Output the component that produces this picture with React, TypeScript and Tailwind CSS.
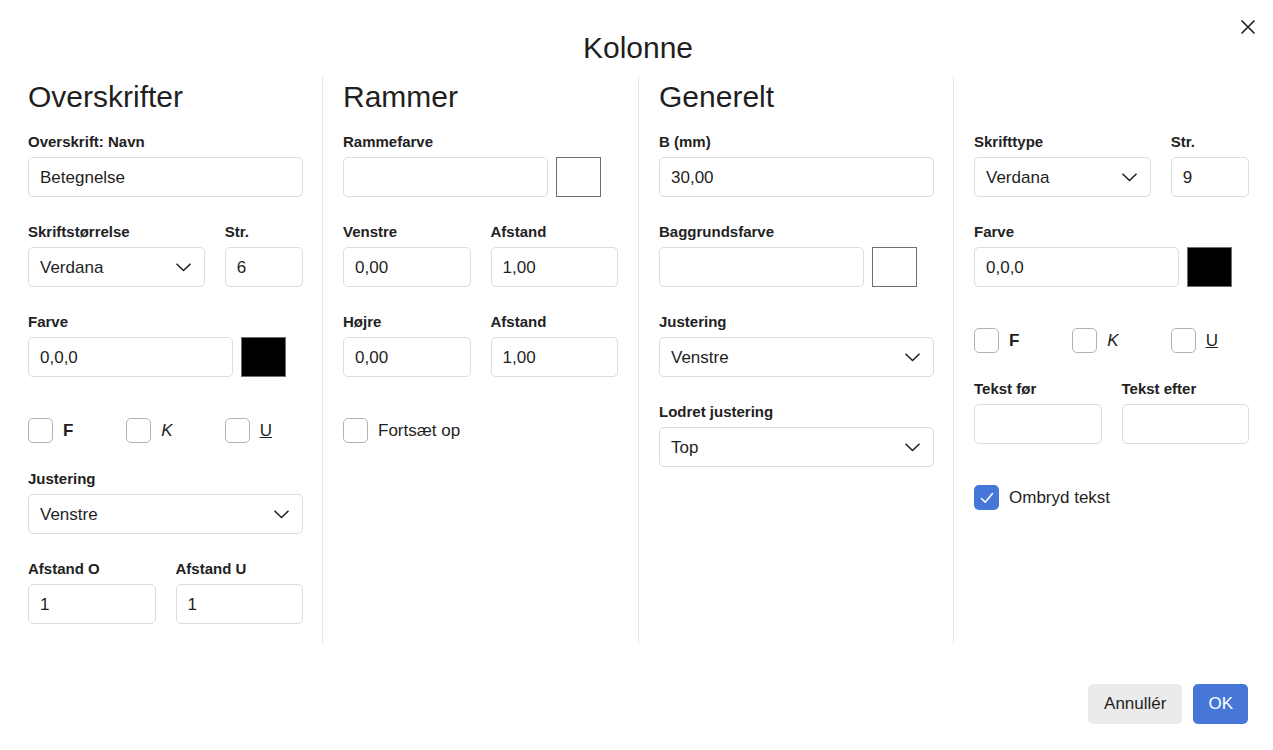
import React from 'react';

const Label: React.FC<{ children: React.ReactNode }> = ({ children }) => (
  <div className="text-[15px] leading-[18px] font-bold text-[#222] mb-[6px] whitespace-nowrap">{children}</div>
);

const Input: React.FC<{ value?: string; className?: string }> = ({ value = '', className = '' }) => (
  <div
    className={`h-[40px] rounded-[5px] border border-[#dcdcdc] bg-white px-[11px] pt-[2px] flex items-center text-[17px] text-[#1f1f1f] ${className}`}
  >
    {value}
  </div>
);

const Select: React.FC<{ value: string; className?: string }> = ({ value, className = '' }) => (
  <div
    className={`h-[40px] rounded-[5px] border border-[#dcdcdc] bg-white pl-[11px] pr-[13px] flex items-center justify-between text-[17px] text-[#1f1f1f] ${className}`}
  >
    <span className="pt-[2px]">{value}</span>
    <svg width="15" height="9" viewBox="0 0 15 9" fill="none">
      <path d="M1 1.2 7.5 7.5 14 1.2" stroke="#222" strokeWidth="1.6" strokeLinecap="round" strokeLinejoin="round" />
    </svg>
  </div>
);

const ColorField: React.FC<{ value?: string; swatch: 'black' | 'white' }> = ({ value = '', swatch }) => (
  <div className="flex gap-[8px]">
    <Input value={value} className="w-[205px]" />
    <div
      className={`w-[45px] h-[40px] border border-[#707070] ${swatch === 'black' ? 'bg-black' : 'bg-white'}`}
    />
  </div>
);

const Check: React.FC<{ checked?: boolean; children: React.ReactNode }> = ({ checked, children }) => (
  <div className="flex items-center gap-[10px] h-[25px]">
    {checked ? (
      <div className="w-[25px] h-[25px] rounded-[5px] bg-[#4677d8] flex items-center justify-center">
        <svg width="14" height="12" viewBox="0 0 14 12" fill="none">
          <path d="M1.5 6.5 5.2 10.2 12.5 1.5" stroke="white" strokeWidth="1.6" strokeLinecap="round" strokeLinejoin="round" />
        </svg>
      </div>
    ) : (
      <div className="w-[25px] h-[25px] rounded-[5px] border border-[#b3b3b3] bg-white" />
    )}
    <span className="text-[17px] text-[#1f1f1f] leading-[20px]">{children}</span>
  </div>
);

const StyleChecks = () => (
  <div className="grid grid-cols-3 gap-x-[20px] mt-[15px]">
    <Check><span className="font-bold">F</span></Check>
    <Check><span className="italic">K</span></Check>
    <Check><span className="underline">U</span></Check>
  </div>
);

const Heading: React.FC<{ children?: React.ReactNode }> = ({ children }) => (
  <h2 className="mt-[2px] mb-[18px] h-[36px] text-[30px] leading-[36px] text-[#1f1f1f]">{children}</h2>
);

const Column: React.FC<{ className: string; children: React.ReactNode }> = ({ className, children }) => (
  <div className={`shrink-0 pb-[19px] pl-[20px] ${className}`}>{children}</div>
);

export default function App() {
  return (
    <div
      className="relative w-[1273px] h-[750px] bg-white text-[#1f1f1f] overflow-hidden"
      style={{ fontFamily: '"Liberation Sans", Arial, sans-serif' }}
    >
      <button className="absolute top-[20px] right-[18px] w-[14px] h-[14px]" aria-label="Luk">
        <svg width="14" height="14" viewBox="0 0 14 14" fill="none">
          <path d="M1 1 13 13M13 1 1 13" stroke="#222" strokeWidth="1.7" strokeLinecap="round" />
        </svg>
      </button>

      <h1 className="pt-[30px] pl-[3px] h-[66px] text-center text-[30px] leading-[36px] text-[#1f1f1f]">Kolonne</h1>

      <div className="flex ml-[8px] mt-[11px]">
        <Column className="w-[314px] pr-[19px]">
          <Heading>Overskrifter</Heading>
          <div className="flex flex-col gap-[26px]">
            <div>
              <Label>Overskrift: Navn</Label>
              <Input value="Betegnelse" />
            </div>
            <div className="grid grid-cols-3 gap-x-[20px]">
              <div className="col-span-2">
                <Label>Skriftstørrelse</Label>
                <Select value="Verdana" />
              </div>
              <div>
                <Label>Str.</Label>
                <Input value="6" />
              </div>
            </div>
            <div>
              <Label>Farve</Label>
              <ColorField value="0,0,0" swatch="black" />
            </div>
            <StyleChecks />
            <div className="mt-[1px]">
              <Label>Justering</Label>
              <Select value="Venstre" />
            </div>
            <div className="grid grid-cols-2 gap-x-[20px]">
              <div>
                <Label>Afstand O</Label>
                <Input value="1" />
              </div>
              <div>
                <Label>Afstand U</Label>
                <Input value="1" />
              </div>
            </div>
          </div>
        </Column>

        <Column className="w-[316px] pr-[20px] border-l border-[#e6e6e6]">
          <Heading>Rammer</Heading>
          <div className="flex flex-col gap-[26px]">
            <div>
              <Label>Rammefarve</Label>
              <ColorField swatch="white" />
            </div>
            <div className="grid grid-cols-2 gap-x-[20px]">
              <div>
                <Label>Venstre</Label>
                <Input value="0,00" />
              </div>
              <div>
                <Label>Afstand</Label>
                <Input value="1,00" />
              </div>
            </div>
            <div className="grid grid-cols-2 gap-x-[20px]">
              <div>
                <Label>Højre</Label>
                <Input value="0,00" />
              </div>
              <div>
                <Label>Afstand</Label>
                <Input value="1,00" />
              </div>
            </div>
            <div className="mt-[15px]">
              <Check>Fortsæt op</Check>
            </div>
          </div>
        </Column>

        <Column className="w-[315px] pr-[19px] border-l border-[#e6e6e6]">
          <Heading>Generelt</Heading>
          <div className="flex flex-col gap-[26px]">
            <div>
              <Label>B (mm)</Label>
              <Input value="30,00" />
            </div>
            <div>
              <Label>Baggrundsfarve</Label>
              <ColorField swatch="white" />
            </div>
            <div>
              <Label>Justering</Label>
              <Select value="Venstre" />
            </div>
            <div>
              <Label>Lodret justering</Label>
              <Select value="Top" />
            </div>
          </div>
        </Column>

        <Column className="w-[315px] pr-[19px] border-l border-[#e6e6e6]">
          <Heading />
          <div className="flex flex-col gap-[26px]">
            <div className="grid grid-cols-3 gap-x-[20px]">
              <div className="col-span-2">
                <Label>Skrifttype</Label>
                <Select value="Verdana" />
              </div>
              <div>
                <Label>Str.</Label>
                <Input value="9" />
              </div>
            </div>
            <div>
              <Label>Farve</Label>
              <ColorField value="0,0,0" swatch="black" />
            </div>
            <StyleChecks />
            <div className="grid grid-cols-2 gap-x-[20px] mt-[1px]">
              <div>
                <Label>Tekst før</Label>
                <Input />
              </div>
              <div>
                <Label>Tekst efter</Label>
                <Input />
              </div>
            </div>
            <div className="mt-[15px]">
              <Check checked>Ombryd tekst</Check>
            </div>
          </div>
        </Column>
      </div>

      <div className="flex justify-end gap-[11px] pr-[25px] mt-[41px]">
        <button className="h-[40px] px-[16px] rounded-[5px] bg-[#ebebeb] text-[17px] text-[#1f1f1f]">Annullér</button>
        <button className="h-[40px] px-[15px] rounded-[5px] bg-[#4677d8] text-[17px] text-white">OK</button>
      </div>
    </div>
  );
}
